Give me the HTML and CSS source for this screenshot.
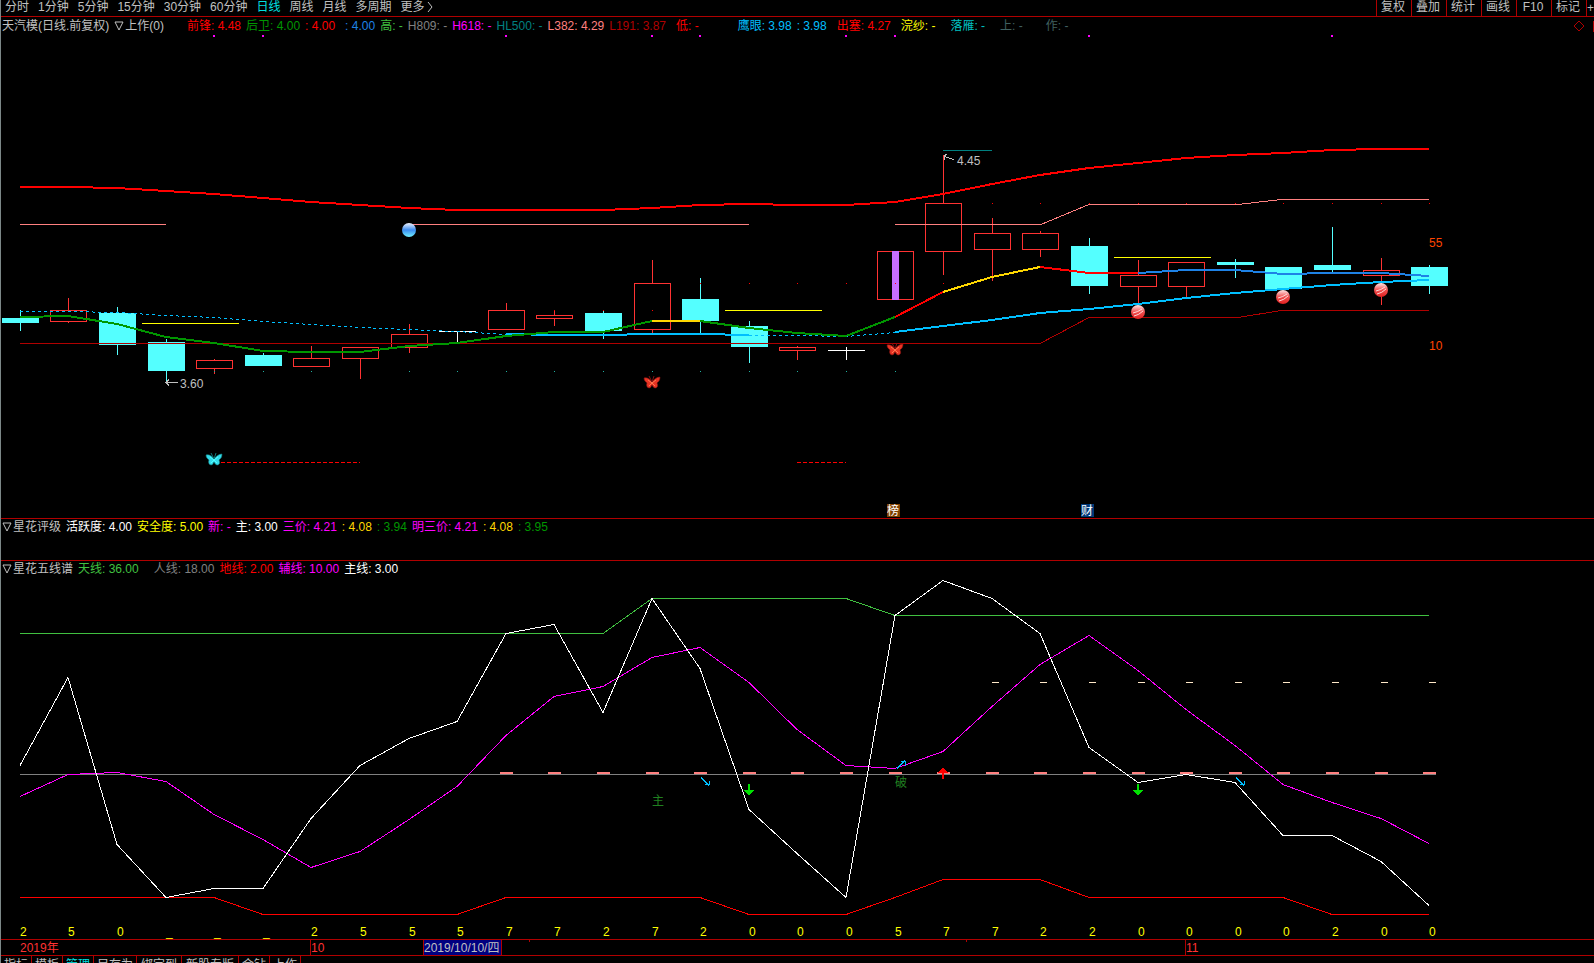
FILE: index.html
```html
<!DOCTYPE html>
<html lang="zh-CN">
<head>
<meta charset="utf-8">
<title>天汽模 日线</title>
<link rel="stylesheet" href="styles.css">
</head>
<body>
<div class="app">
  <header class="toolbar">
    <nav class="periods">
      <button>分时</button><button>1分钟</button><button>5分钟</button><button>15分钟</button><button>30分钟</button><button>60分钟</button><button class="active">日线</button><button>周线</button><button>月线</button><button>多周期</button><button class="more">更多<svg width="6" height="10" viewBox="0 0 6 10"><path d="M1 0L5 5L1 10"/></svg></button>
    </nav>
    <div class="tools">
      <button>复权</button><button>叠加</button><button>统计</button><button>画线</button><button>F10</button><button>标记</button><button class="plus">+</button>
    </div>
  </header>

  <section class="panel">
    <div class="legend">
      <span>天汽模(日线.前复权)</span>
      <button class="fold" aria-label="指标菜单"><svg width="10" height="10" viewBox="0 0 10 10"><path d="M1 1H9L5 9Z"/></svg></button>
      <span class="name">上作(0)</span>
      <span class="red gap-l">前锋: 4.48</span>
      <span class="green">后卫: 4.00</span>
      <span class="red">: 4.00</span>
      <span class="blue gap-s">: 4.00</span>
      <span class="lime">高: -</span>
      <span class="gray">H809: -</span>
      <span class="magenta">H618: -</span>
      <span class="teal">HL500: -</span>
      <span class="pink">L382: 4.29</span>
      <span class="dark">L191: 3.87</span>
      <span class="red gap-s">低: -</span>
      <span class="sky gap-xl">鹰眼: 3.98</span>
      <span class="sky">: 3.98</span>
      <span class="red gap-s">出塞: 4.27</span>
      <span class="yellow gap-s">浣纱: -</span>
      <span class="cyan gap-m">落雁: -</span>
      <span class="slate gap-m">上: -</span>
      <span class="slate gap-l">作: -</span>
      <span class="corner"><svg width="12" height="12" viewBox="0 0 12 12"><path d="M6 1L11 6L6 11L1 6Z"/></svg></span>
    </div>
    <svg id="price" class="chart" viewBox="1 35 1593 483" role="img" aria-label="日线K线图"></svg>
  </section>

  <section class="panel rating">
    <div class="legend">
      <button class="fold" aria-label="指标菜单"><svg width="10" height="10" viewBox="0 0 10 10"><path d="M1 1H9L5 9Z"/></svg></button>
      <span class="name">星花评级</span>
      <span class="white">活跃度: 4.00</span>
      <span class="yellow">安全度: 5.00</span>
      <span class="magenta">新: -</span>
      <span class="white">主: 3.00</span>
      <span class="magenta">三价: 4.21</span>
      <span class="gold">: 4.08</span>
      <span class="green">: 3.94</span>
      <span class="magenta">明三价: 4.21</span>
      <span class="gold">: 4.08</span>
      <span class="green">: 3.95</span>
    </div>
  </section>

  <section class="panel">
    <div class="legend">
      <button class="fold" aria-label="指标菜单"><svg width="10" height="10" viewBox="0 0 10 10"><path d="M1 1H9L5 9Z"/></svg></button>
      <span class="name">星花五线谱</span>
      <span class="lime">天线: 36.00</span>
      <span class="gray gap-m">人线: 18.00</span>
      <span class="red">地线: 2.00</span>
      <span class="magenta">辅线: 10.00</span>
      <span class="white">主线: 3.00</span>
    </div>
    <svg id="staff" class="chart" viewBox="1 579 1593 376" role="img" aria-label="星花五线谱"></svg>
  </section>

  <footer class="tabs">
    <button>指标</button><button>模板</button><button class="active">管理</button><button>另存为</button><button class="wide">绑定到</button><button class="wide">新股专版</button><button>金钻</button><button>上作</button>
  </footer>
</div>
<script src="chart.js"></script>
</body>
</html>
```

FILE: styles.css
```css
* { box-sizing: border-box; }
html, body { margin: 0; height: 100%; background: #000; }
body, button { font: 12px/16px "Liberation Sans", "Noto Sans CJK SC", sans-serif; color: #c0c0c0; }
button { background: none; border: 0; padding: 0; margin: 0; white-space: nowrap; cursor: pointer; }
.app { height: 100vh; overflow: hidden; border-left: 1px solid #7c8888; display: flex; flex-direction: column; }
.toolbar, .panel, .tabs { flex: none; }

.toolbar { display: flex; justify-content: space-between; height: 17px; border-bottom: 1px solid #b00000; }
.toolbar button { line-height: 14px; height: 16px; padding-bottom: 2px; }
.periods { display: flex; gap: 9px; padding-left: 4px; }
.more { display: flex; gap: 2px; align-items: center; }
.more svg { fill: none; stroke: #c0c0c0; }
button.active { color: #00e0e0; }
.tools { display: flex; }
.tools button { width: 35px; border-left: 1px solid #b00000; padding-right: 2px; }
.tools .plus { width: 8px; overflow: hidden; padding: 0; }

.panel + .panel { border-top: 1px solid #b00000; }
.rating { height: 42px; }
.legend { display: flex; align-items: center; gap: 5px; height: 18px; padding-left: 1px; white-space: nowrap; overflow: hidden; }
.rating .legend, .rating + .panel .legend { line-height: 14px; padding-bottom: 2px; }
.fold { display: flex; width: 10px; }
.fold svg { fill: none; stroke: #c0c0c0; }
.fold + .name { margin-left: -4px; }
.corner { margin-left: auto; display: flex; gap: 8px; align-items: center; }
.corner svg { fill: none; stroke: #b00000; }
.corner::after { content: ""; width: 1px; height: 11px; background: #b00000; }
.gap-s { margin-left: 5px; }
.gap-m { margin-left: 10px; }
.gap-l { margin-left: 18px; }
.gap-xl { margin-left: 34px; }

.red { color: #ff0000; }
.green { color: #009600; }
.blue { color: #1e82e6; }
.lime { color: #40c040; }
.gray { color: #808080; }
.magenta { color: #ff00ff; }
.teal { color: #008080; }
.pink { color: #ff8080; }
.dark { color: #b00000; }
.sky { color: #00bfff; }
.yellow { color: #ffff00; }
.gold { color: #ffd700; }
.cyan { color: #00c0c0; }
.slate { color: #406060; }
.white { color: #ffffff; }

.chart { display: block; width: 100%; height: auto; shape-rendering: crispEdges; }
.chart text { font: 12px "Liberation Sans", "Noto Sans CJK SC", sans-serif; }
.smooth { shape-rendering: geometricPrecision; }

.tabs { display: flex; height: 19px; border-top: 1px solid #b00000; }
.tabs button { padding: 0 3px; border-right: 1px solid #b00000; }
.tabs .wide { padding: 0 4px; }
```

FILE: chart.js
```js
const NS = "http://www.w3.org/2000/svg";
const X = [20, 68, 117, 166, 214, 263, 311, 360, 409, 457, 506, 554, 603, 652, 700,
  749, 797, 846, 895, 943, 992, 1040, 1089, 1138, 1186, 1235, 1283, 1332, 1381, 1429];

function painter(svg) {
  function el(name, attrs, parent) {
    const node = document.createElementNS(NS, name);
    for (const key in attrs) node.setAttribute(key, attrs[key]);
    (parent || svg).appendChild(node);
    return node;
  }
  return {
    el,
    rect: (x1, y1, x2, y2, fill) => el("rect", { x: x1, y: y1, width: x2 - x1, height: y2 - y1, fill }),
    line(points, stroke, width = 1, dash) {
      const half = width % 2 ? 0.5 : 0;
      const attrs = { points: points.map(p => [p[0], p[1] + half].join()).join(" "), fill: "none", stroke, "stroke-width": width };
      if (dash) attrs["stroke-dasharray"] = dash;
      el("polyline", attrs);
    },
    text: (x, y, fill, value) => { el("text", { x, y, fill }).textContent = value; }
  };
}
const series = (from, ys) => ys.map((y, i) => [X[from + i], y]);

// Price panel
const p = painter(document.getElementById("price"));
const UP = "#ff3232", DOWN = "#54ffff", FLAT = "#ffffff";
// kind, high, body top, body bottom, low
const candles = [
  ["d", 310, 318, 323, 331], ["u", 298, 310, 322, 323], ["d", 307, 313, 345, 355],
  ["d", 339, 342, 371, 382], ["u", 359, 360, 369, 374], ["d", 353, 355, 366, 366],
  ["u", 346, 358, 367, 367], ["u", 347, 347, 359, 379], ["u", 324, 334, 348, 353],
  ["f", 331, 331, 332, 342], ["u", 303, 310, 330, 330], ["u", 310, 315, 319, 326],
  ["d", 311, 313, 331, 339], ["u", 260, 283, 330, 334], ["d", 278, 299, 321, 334],
  ["d", 321, 326, 347, 363], ["u", 346, 347, 351, 360], ["f", 347, 350, 351, 360],
  ["u", 251, 251, 300, 300], ["u", 155, 203, 252, 275], ["u", 218, 233, 250, 281],
  ["u", 231, 233, 250, 257], ["d", 238, 246, 286, 294], ["u", 260, 275, 287, 304],
  ["u", 262, 262, 287, 298], ["d", 259, 262, 265, 278], ["d", 267, 267, 289, 289],
  ["d", 227, 265, 270, 272], ["u", 258, 270, 276, 305], ["d", 265, 267, 286, 294]
];
candles.forEach(([kind, high, top, bottom, low], i) => {
  const x = X[i], color = { u: UP, d: DOWN, f: FLAT }[kind];
  p.rect(x, high, x + 1, low, color);
  p.rect(x - 18, top, x + 19, bottom, color);
  if (kind === "u") p.rect(x - 17, top + 1, x + 18, bottom - 1, "#000");
});
p.rect(892, 251, 899, 300, "#c86eff");

const DARK = "#b00000", PINK = "#ff8080", SKY = "#00bfff", GREEN = "#009600", BLUE = "#1e82e6", RED = "#ff0000", GOLD = "#ffd700";
p.line([[20, 343], [1040, 343], [1089, 317], [1238, 317], [1281, 310], [1429, 310]], DARK);
p.line([[20, 224], [166, 224]], PINK);
p.line([[409, 224], [749, 224]], PINK);
p.line([[895, 224], [1041, 224], [1089, 204], [1238, 204], [1281, 199], [1429, 199]], PINK);
p.line(series(0, [187, 187, 188, 191, 194, 198, 202, 205, 208, 210, 210, 210, 210, 208, 205,
  204, 205, 205, 202, 194, 184, 175, 168, 163, 158, 155, 153, 150, 149, 149]), RED, 2);
p.line(series(0, [311, 311, 312, 315, 317, 321, 324, 327, 329, 331, 334]), SKY, 1, "3 3");
p.line(series(10, [334, 335, 335, 334, 334, 335]), SKY, 2);
p.line(series(15, [335, 335, 336, 332]), SKY, 1, "3 3");
p.line(series(18, [332, 326, 320, 313, 309, 304, 298, 293, 289, 285, 282, 280]), SKY, 2);
p.line(series(0, [317, 316, 324, 337, 343, 351, 352, 352, 346, 343, 336, 332, 332, 321]), GREEN, 2);
p.line(series(14, [321, 328, 333, 336, 317]), GREEN, 2);
p.line(series(13, [321, 321]), GOLD, 2);
p.line(series(18, [317, 292]), RED, 2);
p.line(series(19, [292, 277, 267]), GOLD, 2);
p.line(series(21, [267, 273, 273]), RED, 2);
p.line(series(23, [273, 270, 270, 274, 273, 273, 276]), BLUE, 2);
p.rect(142, 323, 239, 324, "#ffff00");
p.rect(725, 310, 822, 311, "#ffff00");
p.rect(1114, 257, 1211, 258, "#ffff00");
p.rect(943, 150, 992, 151, "#008080");
p.line([[221, 462], [360, 462]], RED, 1, "4 2");
p.line([[797, 462], [846, 462]], RED, 1, "4 2");

[4, 5, 10, 13, 14, 17, 18, 22, 27].forEach(i => p.rect(X[i] - 1, 35, X[i] + 1, 37, "#ff00ff"));
[11, 12, 13].forEach(i => p.rect(X[i], 310, X[i] + 1, 311, RED));
[14, 15, 16, 17, 18, 19].forEach(i => p.rect(X[i], 283, X[i] + 1, 284, RED));
for (let i = 20; i < 30; i++) p.rect(X[i], 203, X[i] + 1, 204, RED);
for (let i = 4; i < 19; i++) if (i !== 7) p.rect(X[i], 371, X[i] + 1, 372, "#20b0a0");

function butterfly(x, y, fill, edge, vein) {
  const g = p.el("g", { class: "smooth", transform: `translate(${x} ${y})` });
  p.el("path", { d: "M0 0C-2-3-5-5-8-4C-8-1-6 0-5 1C-6 3-5 6-3 6C-1 6-1 4 0 3C1 4 1 6 4 6C6 5 6 3 5 1C6 0 8-1 8-5C5-5 2-3 0 0Z", fill, stroke: edge, "stroke-width": 0.6 }, g);
  p.el("path", { d: "M0 0L-3-6M0 0L2-6", stroke: edge, fill: "none" }, g);
  p.el("path", { d: "M-4-2L0 1L4-2M-3 4L0 1L3 4", stroke: vein, fill: "none" }, g);
}
butterfly(214, 459, "#32dcec", "#117777", "#50ffff");
butterfly(652, 382, "#e83424", "#801010", "#ff7850");
butterfly(895, 349, "#e83424", "#801010", "#ff7850");

const defs = p.el("defs", {});
function gradient(id, stops) {
  const g = p.el("linearGradient", { id, x1: 0, y1: 0, x2: 0, y2: 1 }, defs);
  stops.forEach((c, i) => p.el("stop", { offset: i / (stops.length - 1), "stop-color": c }, g));
}
gradient("sea", ["#f0f4ff", "#3c8cf0", "#70f0ff"]);
gradient("coral", ["#ffe8e8", "#f05050", "#e02020"]);
p.el("circle", { class: "smooth", cx: 409, cy: 230, r: 7, fill: "url(#sea)" });
[[1138, 312], [1283, 297], [1381, 290]].forEach(([cx, cy]) => {
  p.el("circle", { class: "smooth", cx, cy, r: 7, fill: "url(#coral)" });
  p.el("path", { class: "smooth", d: `M${cx - 5} ${cy + 1}Q${cx} ${cy} ${cx + 4} ${cy - 3}M${cx - 4} ${cy + 4}Q${cx + 1} ${cy + 3} ${cx + 5} ${cy - 1}`, stroke: "#ffd8d8", fill: "none" });
});

const LABEL = "#c0c0c0";
p.line([[166, 382], [178, 382]], LABEL);
p.line([[169, 379], [166, 382], [169, 385]], LABEL);
p.text(180, 388, LABEL, "3.60");
p.line([[944, 156], [954, 159]], LABEL);
p.line([[947, 154], [944, 155], [944, 159]], LABEL);
p.text(957, 165, LABEL, "4.45");
p.text(1429, 247, "#ff4500", "55");
p.text(1429, 350, "#ff4500", "10");
p.rect(887, 504, 900, 517, "#804000");
p.text(887, 515, "#fff", "榜");
p.rect(1081, 504, 1094, 517, "#003878");
p.text(1081, 515, "#fff", "财");

// Five-line panel
const s = painter(document.getElementById("staff"));
s.rect(20, 774, 1436, 775, "#808080");
for (let i = 10; i < 30; i++) s.rect(X[i] - 6, 772, X[i] + 7, 774, PINK);
for (let i = 20; i < 30; i++) s.rect(X[i], 682, X[i] + 7, 683, "#ffe8c8");
const level = v => Math.round(931.8 - 8.79 * v);
const steps = (...runs) => runs.flatMap(([value, count]) => Array(count).fill(level(value)));
s.line(series(0, steps([34, 13], [38, 5], [36, 12])), "#40c040");
s.line(series(0, steps([4, 5], [2, 5], [4, 5], [2, 3], [4, 1], [6, 3], [4, 5], [2, 3])), RED);
s.line(series(0, [796, 774, 772, 781, 814, 839, 867, 851, 819, 786, 735, 696, 686, 657, 647,
  682, 729, 765, 768, 751, 706, 664, 635, 670, 709, 745, 784, 802, 818, 843]), "#ff00ff");
s.line(series(0, [19, 29, 10, 4, 5, 5, 13, 19, 22, 24, 34, 35, 25, 38, 30, 14, 9, 4, 36, 40,
  38, 34, 21, 17, 18, 17, 11, 11, 8, 3].map(level)), "#ffffff");

const arrow = (x, y, dir, fill) => s.el("path", {
  d: `M${x - 1} ${y - 6 * dir}H${x + 1}V${y}H${x + 5}L${x} ${y + 6 * dir}L${x - 5} ${y}H${x - 1}Z`, fill });
arrow(749, 790, 1, "#00e000");
arrow(1138, 790, 1, "#00e000");
arrow(943, 773, -1, RED);
[[701, 777], [1236, 777]].forEach(([x, y]) => {
  s.line([[x, y], [x + 8, y + 8]], SKY);
  s.line([[x + 8, y + 3], [x + 8, y + 7], [x + 4, y + 7]], SKY);
});
s.line([[897, 768], [905, 760]], SKY);
s.line([[901, 761], [905, 761], [905, 765]], SKY);
s.text(652, 805, "#208020", "主");
s.text(895, 787, "#208020", "破");

[2, 5, 0, "_", "_", "_", 2, 5, 5, 5, 7, 7, 2, 7, 2, 0, 0, 0, 5, 7, 7, 2, 2, 0, 0, 0, 0, 2, 0, 0]
  .forEach((c, i) => s.text(X[i], 936, "#ffff00", c));

// Time axis
s.rect(1, 939, 1594, 940, DARK);
[310, 1185].forEach(x => s.rect(x, 939, x + 1, 955, DARK));
[529, 966].forEach(x => s.rect(x, 940, x + 1, 942, DARK));
s.rect(423, 939, 502, 955, DARK);
s.rect(424, 940, 501, 955, "#000080");
s.text(20, 952, UP, "2019年");
s.text(311, 952, UP, "10");
s.text(1186, 952, UP, "11");
s.text(424, 952, LABEL, "2019/10/10/四");
```
